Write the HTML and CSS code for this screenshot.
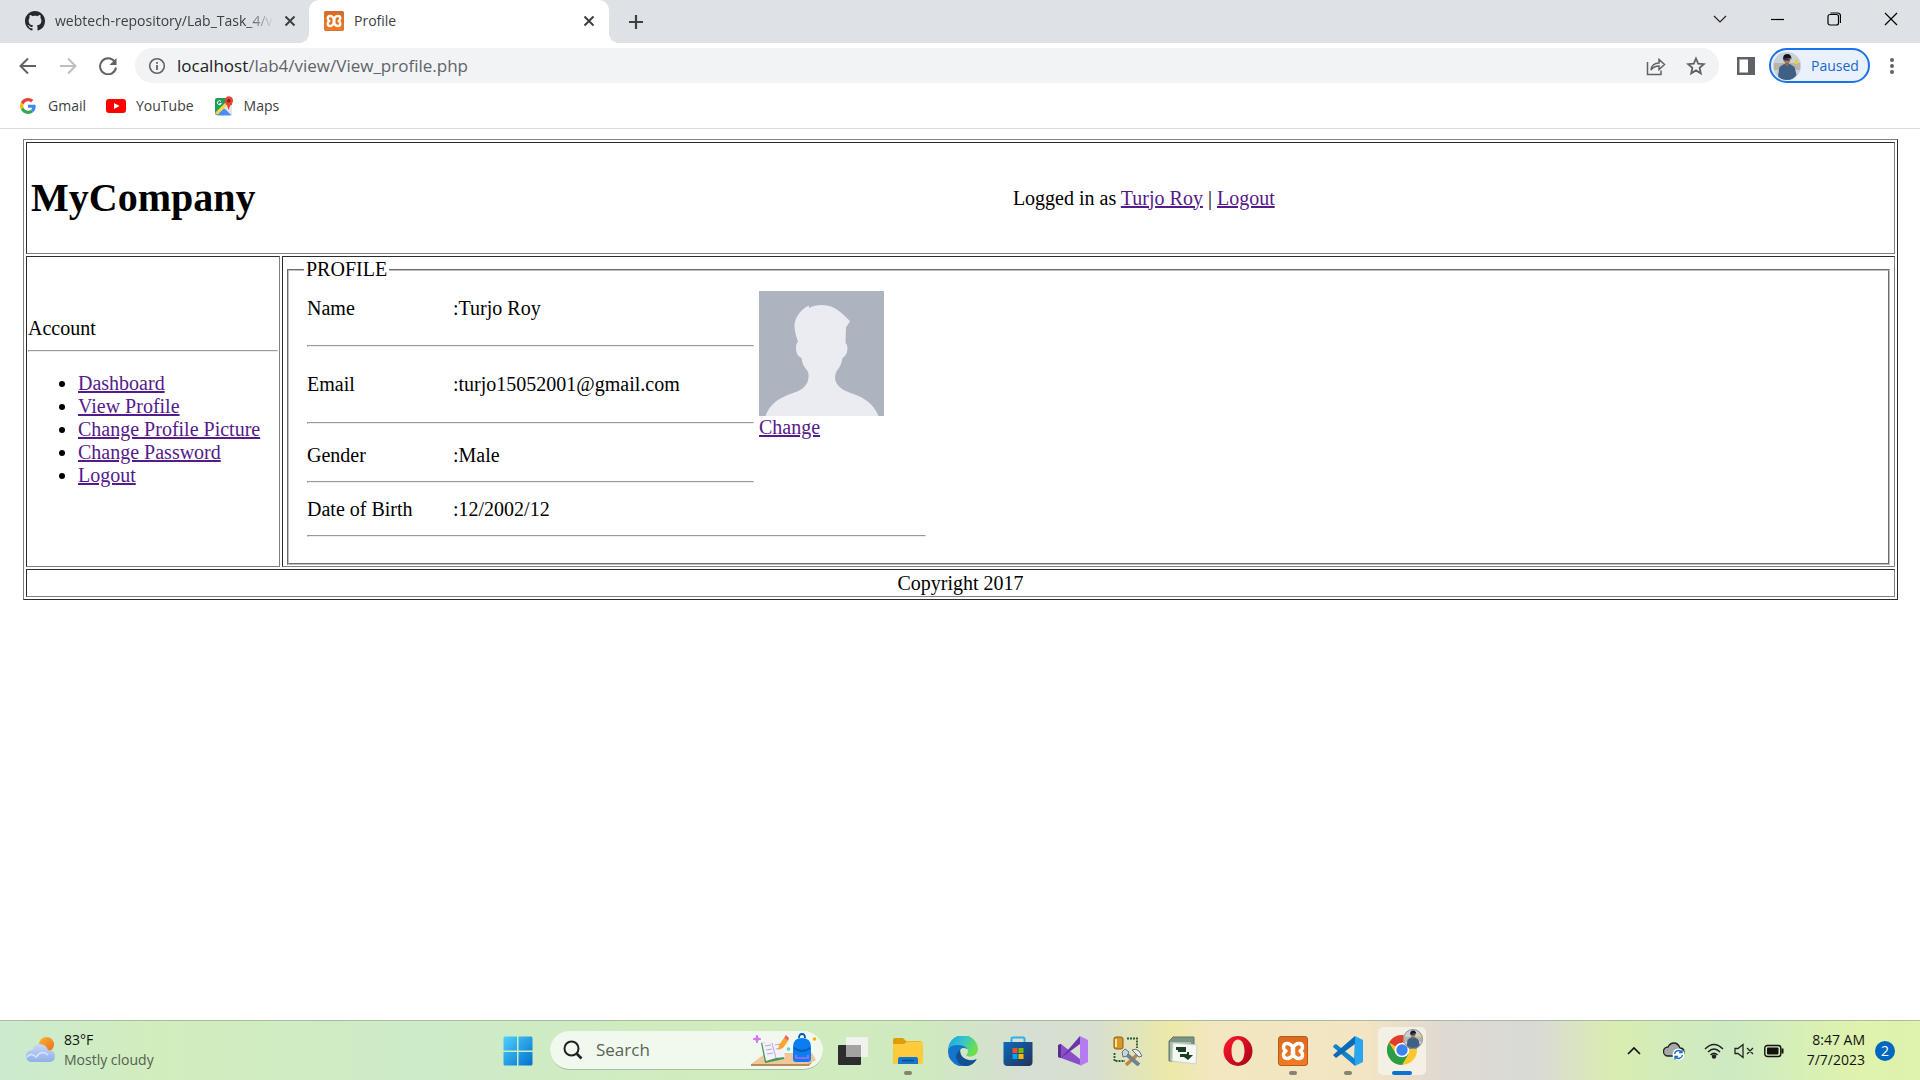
FILE: index.html
```html
<!DOCTYPE html>
<html lang="en">
<head>
<meta charset="utf-8">
<title>Profile</title>
<link rel="stylesheet" href="styles.css">
</head>
<body>
<svg class="defs" aria-hidden="true">
  <defs>
    <linearGradient id="xa" x1="0" y1="0" x2="0" y2="1"><stop offset="0" stop-color="#d96a20"/><stop offset="1" stop-color="#f57a22"/></linearGradient>
    <symbol id="xampp" viewBox="0 0 30 30">
      <rect x=".5" y=".5" width="29" height="29" rx="2.500" fill="url(#xa)" stroke="#b85a1c"/>
      <path d="M9 7.500q4 0 6 4.500 2-4.500 6-4.500 3.500 0 3.500 3.500 0 2.500-2.500 4 2.500 1.500 2.500 4 0 3.500-3.500 3.500-4 0-6-4.500-2 4.500-6 4.500-3.500 0-3.500-3.500 0-2.500 2.500-4-2.500-1.500-2.500-4 0-3.500 3.500-3.500z" fill="none" stroke="#fff" stroke-width="3.400" stroke-linejoin="round"/>
      <path d="M15 12v6" stroke="#fff" stroke-width="4.500"/>
    </symbol>
    <symbol id="cross" viewBox="0 0 12 12"><path d="M1.500 1.500l9 9M10.500 1.500l-9 9" stroke="#3c4043" stroke-width="2"/></symbol>
    <symbol id="person" viewBox="0 0 28 28">
      <circle cx="14" cy="14" r="14" fill="#c9d0d8"/>
      <path d="M1 11h26v7H1z" fill="#b9b3a8"/><path d="M22 7l3 1v4h-3z" fill="#e8cf3c"/>
      <path d="M5 24l1.500-9 4.500-3h6l4.500 3 2 8q-3 5-9.500 5t-9-4z" fill="#3e5f86"/>
      <path d="M12 9h4v4l-2 1-2-1z" fill="#8f6650"/><circle cx="14" cy="7.500" r="3.500" fill="#a77b62"/><path d="M10 7q0-5 4.200-5t4.200 5l-2-1-5 1z" fill="#17171b"/><path d="M10.500 6.500h6v2h-6z" fill="#26365e"/>
    </symbol>
  </defs>
</svg>

<header class="browser">
  <div class="tabstrip">
    <div class="tab">
      <svg width="20" height="20" viewBox="0 0 16 16"><path fill="#24292f" d="M8 0C3.580 0 0 3.580 0 8c0 3.540 2.290 6.530 5.470 7.590.4.070.55-.17.55-.38 0-.19-.01-.82-.01-1.490-2.010.37-2.530-.49-2.690-.94-.09-.23-.48-.94-.82-1.130-.28-.15-.68-.52-.01-.53.63-.01 1.080.58 1.230.82.72 1.210 1.870.87 2.330.66.070-.52.280-.87.510-1.070-1.780-.2-3.640-.89-3.640-3.950 0-.87.310-1.590.820-2.150-.08-.2-.36-1.020.08-2.120 0 0 .67-.21 2.200.82.640-.18 1.320-.27 2-.27s1.360.09 2 .27c1.530-1.040 2.200-.82 2.200-.82.440 1.100.160 1.920.080 2.120.510.560.820 1.270.820 2.150 0 3.070-1.870 3.750-3.650 3.950.290.250.540.730.540 1.480 0 1.070-.01 1.930-.01 2.200 0 .210.150.460.550.380A8.010 8.010 0 0 0 16 8c0-4.420-3.580-8-8-8z"/></svg>
      <span class="tab-title fade">webtech-repository/Lab_Task_4/v</span>
      <button class="icon-btn" aria-label="Close tab"><svg width="12" height="12"><use href="#cross"/></svg></button>
    </div>
    <div class="tab active">
      <svg width="20" height="20"><use href="#xampp"/></svg>
      <span class="tab-title">Profile</span>
      <button class="icon-btn" aria-label="Close tab"><svg width="12" height="12"><use href="#cross"/></svg></button>
    </div>
    <button class="icon-btn new-tab" aria-label="New tab"><svg width="16" height="16" viewBox="0 0 16 16"><path d="M8 1v14M1 8h14" stroke="#3c4043" stroke-width="2.200"/></svg></button>
    <div class="window-btns">
      <button class="icon-btn" aria-label="Search tabs"><svg width="14" height="14" viewBox="0 0 14 14"><path d="M1 4l6 6 6-6" fill="none" stroke="#222" stroke-width="1.200"/></svg></button>
      <button class="icon-btn" aria-label="Minimize"><svg width="14" height="14" viewBox="0 0 14 14"><path d="M1 7.500h13" stroke="#000" stroke-width="1.200"/></svg></button>
      <button class="icon-btn" aria-label="Restore"><svg width="14" height="14" viewBox="0 0 14 14" fill="none" stroke="#000" stroke-width="1.200"><rect x="1" y="2.500" width="10.500" height="10.500" rx="2"/><path d="M3.500 1h7q3 0 3 3v7"/></svg></button>
      <button class="icon-btn" aria-label="Close"><svg width="14" height="14" viewBox="0 0 14 14"><path d="M1 1l12 12M13 1L1 13" stroke="#000" stroke-width="1.200"/></svg></button>
    </div>
  </div>

  <div class="toolbar">
    <button class="icon-btn nav" aria-label="Back"><svg width="18" height="18" viewBox="0 0 18 18" fill="none" stroke="#5f6368" stroke-width="2"><path d="M17 9H2M9 1.500L1.500 9 9 16.500"/></svg></button>
    <button class="icon-btn nav" aria-label="Forward"><svg width="18" height="18" viewBox="0 0 18 18" fill="none" stroke="#bcbfc2" stroke-width="2"><path d="M1 9h15M9 1.500L16.500 9 9 16.500"/></svg></button>
    <button class="icon-btn nav" aria-label="Reload"><svg width="18" height="18" viewBox="0 0 18 18"><path d="M15.500 4.500A8 8 0 1 0 17 10.500" fill="none" stroke="#5f6368" stroke-width="2"/><path d="M17.500 1v7h-7z" fill="#5f6368"/></svg></button>
    <div class="omnibox">
      <svg width="18" height="18" viewBox="0 0 18 18"><circle cx="9" cy="9" r="7.300" fill="none" stroke="#5f6368" stroke-width="1.600"/><path d="M9 8v5M9 5v1.800" stroke="#5f6368" stroke-width="1.800"/></svg>
      <span class="url"><b>localhost</b>/lab4/view/View_profile.php</span>
      <button class="icon-btn" aria-label="Share"><svg width="20" height="20" viewBox="0 0 20 20" fill="none" stroke="#5f6368" stroke-width="1.500"><path d="M1.500 6v12.500h13.500v-4"/><path d="M5 14q1-7 8-7V3.500l5.500 5-5.500 5V10q-5 0-8 4z"/></svg></button>
      <button class="icon-btn" aria-label="Bookmark this page"><svg width="20" height="20" viewBox="0 0 20 20"><path d="M10 2.500l2.200 5.100 5.600.5-4.200 3.700 1.200 5.500L10 14.400l-4.800 2.900 1.200-5.500-4.200-3.700 5.600-.5z" fill="none" stroke="#5f6368" stroke-width="1.800"/></svg></button>
    </div>
    <button class="icon-btn side" aria-label="Side panel"><svg width="18" height="18" viewBox="0 0 18 18"><path d="M0 0h18v18H0zM2.500 2.500v13h8.500v-13z" fill="#5f6368" fill-rule="evenodd"/></svg></button>
    <button class="pill"><svg width="28" height="28"><use href="#person"/></svg><span>Paused</span></button>
    <button class="icon-btn menu" aria-label="Menu"><svg width="6" height="18" viewBox="0 0 6 18" fill="#5f6368"><circle cx="3" cy="3" r="2"/><circle cx="3" cy="9" r="2"/><circle cx="3" cy="15" r="2"/></svg></button>
  </div>

  <nav class="bookmarks">
    <a href="#"><svg width="20" height="16" viewBox="0 0 48 48"><path fill="#EA4335" d="M24 9.500c3.540 0 6.710 1.220 9.210 3.600l6.850-6.850C35.900 2.380 30.470 0 24 0 14.620 0 6.510 5.380 2.560 13.220l7.980 6.190C12.430 13.720 17.740 9.500 24 9.500z"/><path fill="#4285F4" d="M46.980 24.550c0-1.570-.15-3.090-.38-4.550H24v9.020h12.940c-.58 2.960-2.260 5.480-4.780 7.180l7.730 6c4.510-4.180 7.090-10.360 7.090-17.650z"/><path fill="#FBBC05" d="M10.530 28.590c-.48-1.450-.76-2.990-.76-4.590s.27-3.140.76-4.590l-7.980-6.190C.92 16.460 0 20.120 0 24c0 3.880.92 7.540 2.560 10.780z"/><path fill="#34A853" d="M24 48c6.480 0 11.930-2.130 15.890-5.810l-7.730-6c-2.150 1.450-4.920 2.300-8.160 2.300-6.260 0-11.570-4.220-13.470-9.910l-7.980 6.190C6.510 42.620 14.620 48 24 48z"/></svg>Gmail</a>
    <a href="#"><svg width="20" height="16" viewBox="0 0 20 16"><rect y="1" width="20" height="14" rx="3" fill="#f00"/><path d="M8 5l5.500 3L8 11z" fill="#fff"/></svg>YouTube</a>
    <a href="#"><svg width="20" height="20" viewBox="0 0 20 20"><path d="M1 4q0-2 2-2h12l3 3v12q0 2-2 2H3q-2 0-2-2z" fill="#1e9e58"/><path d="M3 19l7-7 8 7z" fill="#4e8df5"/><path d="M1 17L14 4l3 3L4 19z" fill="#fdd34c"/><path d="M10 12l7 7 1-1V9l-4-1z" fill="#e6e6e6"/><path d="M3 19.500l7-7 7 7z" fill="#4e8df5"/><path d="M14.500 14q-.5-4-3-6.500Q10 4 12 1.500q2.500-2.500 5.500-.3Q20.500 4 18 7.500q-2.500 2.500-3.500 6.500z" fill="#e84436"/><circle cx="14.800" cy="4.800" r="1.700" fill="#7d231c"/><path d="M7 5.500a2 2 0 1 0 .3 2H5.500" fill="none" stroke="#fff"/></svg>Maps</a>
  </nav>
</header>

<main>
  <table class="layout">
    <tbody>
    <tr>
      <td colspan="2">
        <div class="masthead">
          <h1>MyCompany</h1>
          <div>Logged in as <a href="#">Turjo Roy</a> | <a href="#">Logout</a></div>
        </div>
      </td>
    </tr>
    <tr>
      <td class="side-cell">
        Account
        <hr>
        <ul>
          <li><a href="#">Dashboard</a></li>
          <li><a href="#">View Profile</a></li>
          <li><a href="#">Change Profile Picture</a></li>
          <li><a href="#">Change Password</a></li>
          <li><a href="#">Logout</a></li>
        </ul>
      </td>
      <td>
        <fieldset>
          <legend>PROFILE</legend>
          <table class="profile">
            <colgroup><col class="c-label"><col class="c-value"><col></colgroup>
            <tbody>
            <tr class="r-name"><th scope="row">Name</th><td>:Turjo Roy</td>
              <td class="photo" rowspan="6">
                <svg width="125" height="125" viewBox="0 0 125 125" role="img" aria-label="Profile picture"><rect width="125" height="125" fill="#adb3bf"/><path d="M50 17v-2.500C42 18 35 27 35.500 36c.3 6 2.500 11 3.500 15-3 1-2.500 11 .5 14l3 2c1 7 3 9 6 13 2 3 1 10-1 13-4 7-12 8-21 12-10 4-17 11-20 20h113c-4-10-11-16-20-20-10-4-18-6-22-13-2-4-2-9 1-13 3-4 4-7 5-12 6-3 6-13 3-15l.5-16q2-2 4-6C83 23 77 14 63 14q-8 0-13 3z" fill="#eaecf2"/></svg>
                <a href="#">Change</a>
              </td></tr>
            <tr><td colspan="2"><hr></td></tr>
            <tr class="r-email"><th scope="row">Email</th><td>:turjo15052001@gmail.com</td></tr>
            <tr><td colspan="2"><hr></td></tr>
            <tr class="r-gender"><th scope="row">Gender</th><td>:Male</td></tr>
            <tr><td colspan="2"><hr></td></tr>
            <tr class="r-birth"><th scope="row">Date of Birth</th><td>:12/2002/12</td><td></td></tr>
            <tr><td colspan="3"><hr></td></tr>
            </tbody>
          </table>
        </fieldset>
      </td>
    </tr>
    <tr><td colspan="2" class="copyright">Copyright 2017</td></tr>
    </tbody>
  </table>
</main>

<footer class="taskbar">
  <div class="weather">
    <svg width="30" height="26" viewBox="0 0 30 26"><defs><linearGradient id="cl" x1="0" y1="0" x2="0" y2="1"><stop offset="0" stop-color="#c9d8f5"/><stop offset="1" stop-color="#8fb0ec"/></linearGradient><linearGradient id="sun" x1="0" y1="0" x2="1" y2="1"><stop offset="0" stop-color="#f9b42d"/><stop offset="1" stop-color="#ee6b1a"/></linearGradient></defs><circle cx="21.500" cy="7.500" r="7.500" fill="url(#sun)"/><path d="M6 25a6 6 0 0 1-1-11.500 5 5 0 0 1 2.500-.5Q9 7 15 7q6 0 8 6 7 0 7 6t-6 6z" fill="url(#cl)"/><path d="M2 20q4-5 9 0 6-8 12-2" fill="none" stroke="#dce6fa" stroke-width="1.500"/></svg>
    <div><div>83°F</div><div class="muted">Mostly cloudy</div></div>
  </div>

  <div class="apps">
    <button class="app" aria-label="Start"><svg width="30" height="30" viewBox="0 0 30 30"><defs><linearGradient id="win" x1="0" y1="0" x2="1" y2="1"><stop offset="0" stop-color="#4fd0fb"/><stop offset="1" stop-color="#0070ce"/></linearGradient></defs><path d="M2 .5h12v14H.5V2Q.5.500 2 .5zM15.500.5H28q1.500 0 1.500 1.500v12.500h-14zM.5 16H14v13.500H2Q.5 29.500.5 28zM15.500 16h14v12q0 1.500-1.500 1.500H15.500z" fill="url(#win)"/></svg></button>
    <label class="search">
      <svg width="20" height="20" viewBox="0 0 20 20" fill="none" stroke="#222" stroke-width="2"><circle cx="8.500" cy="8.500" r="7"/><path d="M13.500 13.500l5 5" stroke-width="2.600"/></svg>
      <input type="text" placeholder="Search" aria-label="Search">
      <svg width="68" height="34" viewBox="0 0 68 34"><path d="M0 31l15-11h46l4 7-9 5H0z" fill="#f0c79a"/><path d="M0 31h57l4-2-3 4H0z" fill="#b9895c"/><path d="M10 10l3-1 20 13v4l-19 4z" fill="#3f9a56"/><path d="M11 9l10 1 10-3 3 17-9 1-10 3z" fill="#f4f1fb"/><path d="M21 10l4 15M14 13l6-1M15 17l6-1M16 21l6-1M24 12l5-1M25 16l5-1" stroke="#b3acca" fill="none"/><path d="M27 17l1-5 5-7 4 3-5 7z" fill="#f8a52b"/><path d="M33 5l2-3 3 3-1 3z" fill="#f0645a"/><path d="M6 2l1 3 3 1-3 1-1 3-1-3-3-1 3-1z" fill="#d873f5" stroke="#d873f5"/><path d="M42 14q0-9 9-9t9 9v12q0 3-3 3H45q-3 0-3-3z" fill="#087ef0"/><path d="M48 5q0-4 3-4t3 4M43 15q8 6 16 0" fill="none" stroke="#0759ba" stroke-width="1.800"/><path d="M45 22v3h12v-3" fill="none" stroke="#b06af5" stroke-width="1.600"/><circle cx="63.500" cy="6" r="1.800" fill="#f5ae12"/><circle cx="37.500" cy="16" r="1.800" fill="#57cfe0"/></svg>
    </label>
    <button class="app" aria-label="Task view"><svg width="30" height="30" viewBox="0 0 30 30"><rect y="9" width="23" height="20" rx="1" fill="#2d2d2d"/><rect x="8" y="1" width="22" height="20" rx="1" fill="#f2f2f2" opacity=".92"/><path d="M8 9h15v12H8z" fill="#a3a3a3"/></svg></button>
    <button class="app open" aria-label="File Explorer"><svg width="30" height="30" viewBox="0 0 30 30"><path d="M0 4q0-2 2-2h8l3 3h15v4H0z" fill="#e09d08"/><path d="M0 8h11l3-2.500h14q2 0 2 2V26q0 2-2 2H0z" fill="#fecb3c"/><path d="M5 28v-5q0-2 2-2h16q2 0 2 2v5z" fill="#1277ce"/><path d="M9 24.500h12" stroke="#0a4c91" stroke-width="1.600"/></svg></button>
    <button class="app" aria-label="Edge"><svg width="30" height="30" viewBox="0 0 30 30"><defs><linearGradient id="eg" x1="0" y1="0" x2="1" y2=".4"><stop offset="0" stop-color="#1b9fe0"/><stop offset=".5" stop-color="#31c3d2"/><stop offset="1" stop-color="#6ee04a"/></linearGradient></defs><path d="M0 15A15 15 0 0 1 30 13c0 5-4 7.500-8 7.500-3 0-4-1-3.500-2Q20 17 20 15q-1-5-8-5Q3 10 0 15z" fill="url(#eg)"/><path d="M0 15q1-6 9-6 8 0 10.500 4Q13 10 12 15c0 6 4 10 9 10q4 0 7-2a15 15 0 0 1-28-8z" fill="#1575ca"/><path d="M12 14q-4 3-4 7 1 7 8 9 8 1 13-7-4 2-8 1-9-2-9-10z" fill="#124f96"/></svg></button>
    <button class="app" aria-label="Microsoft Store"><svg width="30" height="30" viewBox="0 0 30 30"><defs><linearGradient id="st" x1="0" y1="0" x2="1" y2="1"><stop offset="0" stop-color="#0b6cbd"/><stop offset="1" stop-color="#26305a"/></linearGradient></defs><path d="M8.500 6V3q0-1.500 1.500-1.500h10q1.500 0 1.500 1.500v3" fill="none" stroke="#2ab1ee" stroke-width="2"/><path d="M.5 6h29v20q0 4-4 4h-21q-4 0-4-4z" fill="url(#st)"/><path d="M9.500 12h5v5h-5z" fill="#f25022"/><path d="M15.500 12h5v5h-5z" fill="#7fba00"/><path d="M9.500 18h5v5h-5z" fill="#00a4ef"/><path d="M15.500 18h5v5h-5z" fill="#ffb900"/></svg></button>
    <button class="app" aria-label="Visual Studio"><svg width="30" height="30" viewBox="0 0 30 30"><path d="M0 9l3-1 19 15v6L3 22l-3-1z" fill="#8a4fc8"/><path d="M0 9l3-1v14l-3-1z" fill="#5c2d91"/><path d="M3 22L22 0v8L3 22z" fill="#6a36a5"/><path d="M22 0l8 4v22l-8 4z" fill="#b57bf0"/></svg></button>
    <button class="app" aria-label="Tools"><svg width="30" height="30" viewBox="0 0 30 30"><rect x="1" y="1" width="9" height="12" rx="2" fill="#d99826" stroke="#8a5d13"/><path d="M3 3v8" stroke="#fbe3a0" stroke-width="2"/><path d="M14 2.500h10V12M1.500 17v8H12" fill="none" stroke="#27582c" stroke-width="1.800" stroke-dasharray="2 1"/><path d="M13 29l12-11" stroke="#b98a3b" stroke-width="3.500"/><path d="M19 14q4-2 7 1l3 5-3 1-3-3z" fill="#e8edf2" stroke="#63707e"/><path d="M12 17l14 12" stroke="#6f8296" stroke-width="4"/><path d="M9 16l3-3 4 3-2 4-4 1z" fill="#c7d5e2" stroke="#63707e"/></svg></button>
    <button class="app" aria-label="Project"><svg width="30" height="30" viewBox="0 0 30 30"><path d="M1 5l4-4h21v9L6 25H1z" fill="#7d9386" stroke="#60776a"/><path d="M2 6h21v4L6 25H2z" fill="#a9bbb0"/><path d="M5 7l24 2-1 19-24-3z" fill="#f4f8f3" stroke="#ccd5ca"/><path d="M8 11h10v5h-8v-2H8zM12 18h7v-2h2v3h4l-5 5-4-3h-4z" fill="#1d3d27"/></svg></button>
    <button class="app" aria-label="Opera"><svg width="30" height="30" viewBox="0 0 30 30"><defs><linearGradient id="op" x1="0" y1="0" x2="1" y2="1"><stop offset="0" stop-color="#ff1b2d"/><stop offset="1" stop-color="#a70014"/></linearGradient></defs><path d="M15 0a14.500 15 0 0 0 0 30 14.500 15 0 0 0 0-30zm0 3.500c4 0 6.500 5 6.500 11.500S19 26.500 15 26.500 8.500 21.500 8.500 15 11 3.500 15 3.500z" fill="url(#op)" fill-rule="evenodd"/></svg></button>
    <button class="app open" aria-label="XAMPP"><svg width="30" height="30"><use href="#xampp"/></svg></button>
    <button class="app open" aria-label="Visual Studio Code"><svg width="30" height="30" viewBox="0 0 30 30"><path d="M22 0l8 4v22l-8 4-1-8z" fill="#2aa6ee"/><path d="M1 9l2-1 19 15v7L0 11z" fill="#1483cf"/><path d="M22 0v8L3 22l-3-3z" fill="#0a6cb8"/></svg></button>
    <button class="app current" aria-label="Chrome"><svg width="38" height="38" viewBox="0 0 38 38"><circle cx="15" cy="22" r="15" fill="#fdc72c"/><path d="M15 22L2 14.500A15 15 0 0 1 28 14.500H15z" fill="#e33b2e"/><path d="M15 22l6.500 4L15 37A15 15 0 0 1 2 14.500L9 26z" fill="#2a9d48"/><circle cx="15" cy="22" r="7.300" fill="#fff"/><circle cx="15" cy="22" r="5.700" fill="#3b83f2"/><svg x="16" y="1" width="20" height="20"><use href="#person"/></svg><circle cx="26" cy="11" r="9.500" fill="none" stroke="#8f949a"/></svg></button>
  </div>

  <div class="tray">
    <svg width="14" height="14" viewBox="0 0 14 14"><path d="M1 10l6-6 6 6" fill="none" stroke="#111" stroke-width="1.600"/></svg>
    <svg class="cloud" width="22" height="20" viewBox="0 0 22 20"><path d="M5 15a4.500 4.500 0 0 1 0-9Q7 2 11 2t6 5q4 0 4 4t-3 4z" fill="#a5a9a5" stroke="#222" stroke-width="1.300"/><circle cx="15.500" cy="13.500" r="6" fill="#fff"/><path d="M11.500 13a4 4 0 0 1 7-2M19.500 14a4 4 0 0 1-7 2M19 8.500v3h-3M12 18.500v-3h3" fill="none" stroke="#1170ca" stroke-width="1.400"/></svg>
    <svg width="20" height="16" viewBox="0 0 20 16" fill="none" stroke="#222" stroke-width="1.500"><path d="M1 6q9-9 18 0M4 9q6-6 12 0M6.500 12q3.500-3.500 7 0"/><circle cx="10" cy="13.500" r="1.500" fill="#222"/></svg>
    <svg width="20" height="16" viewBox="0 0 20 16" fill="none" stroke="#222" stroke-width="1.300"><path d="M1 5.500h3L9 1.500v13l-5-4H1zM13 5l6 6M19 5l-6 6"/></svg>
    <svg width="20" height="14" viewBox="0 0 20 14"><rect x=".8" y="1.500" width="16" height="11" rx="2.500" fill="none" stroke="#111" stroke-width="1.400"/><rect x="3" y="3.500" width="11.500" height="7" rx="1" fill="#111"/><path d="M18.500 4.500v5" stroke="#111" stroke-width="2"/></svg>
    <div class="clock"><div>8:47 AM</div><div>7/7/2023</div></div>
    <span class="badge">2</span>
  </div>
</footer>
</body>
</html>
```
FILE: styles.css
```css
* { box-sizing: border-box; }
body {
  margin: 0;
  min-height: 100vh;
  display: flex;
  flex-direction: column;
  background: #fff;
  color: #000;
  font-family: "Liberation Serif", serif;
  font-size: 20px;
  line-height: 23px;
}
.defs { position: absolute; width: 0; height: 0; }
svg { flex: none; display: block; }
button { font: inherit; border: 0; background: none; padding: 0; color: inherit; }
.icon-btn { display: flex; align-items: center; justify-content: center; flex: none; }

/* Browser frame */
.browser {
  border-bottom: 1px solid #dadce0;
  font-family: "Open Sans", sans-serif;
  font-size: 14px;
  line-height: 20px;
  color: #3c4043;
}
.tabstrip { display: flex; height: 43px; background: #dee1e6; }
.tab { display: flex; align-items: center; width: 309px; padding: 0 13px 1px 25px; gap: 10px; }
.tab-title { flex: 1; min-width: 0; white-space: nowrap; }
.fade { -webkit-mask-image: linear-gradient(90deg, #000 87%, transparent); mask-image: linear-gradient(90deg, #000 87%, transparent); }
.active { position: relative; width: 300px; padding-left: 15px; padding-right: 14px; background: #fff; border-radius: 10px 10px 0 0; }
.active::before, .active::after { content: ""; position: absolute; bottom: 0; width: 10px; height: 10px; }
.active::before { left: -10px; background: radial-gradient(circle at 0 0, #dee1e6 10px, #fff 10px); }
.active::after { right: -10px; background: radial-gradient(circle at 100% 0, #dee1e6 10px, #fff 10px); }
.new-tab { margin: 0 auto 0 19px; width: 16px; }
.window-btns { display: flex; height: 37px; padding-right: 1px; }
.window-btns .icon-btn { width: 57px; }

.toolbar { display: flex; align-items: center; height: 45px; padding: 0 21px 0 8px; }
.nav { width: 40px; }
.omnibox { flex: 1; display: flex; align-items: center; height: 35px; margin-left: 7px; padding: 0 13px; border-radius: 18px; background: #f1f3f4; }
.url { flex: 1; margin-left: 11px; font-size: 17px; color: #5f6368; }
.url b { font-weight: 400; color: #202124; }
.omnibox .icon-btn + .icon-btn { margin-left: 20px; }
.side { margin: 0 14px 0 18px; }
.pill { display: flex; align-items: center; gap: 10px; width: 101px; height: 35px; padding: 0 2px; border: 2px solid #1a73e8; border-radius: 18px; background: #e9f1fc; color: #1967d2; }
.menu { width: 14px; margin-left: 15px; }
.bookmarks { display: flex; gap: 20px; height: 40px; padding: 0 18px 4px; }
.bookmarks a { display: flex; align-items: center; gap: 10px; color: #3c4043; text-decoration: none; }

/* Page */
main { flex: 1; padding: 10px 22px 10px 23px; }
main a { color: #551a8b; }
hr { margin: 10px 0; height: 2px; border: 1px solid; border-color: #9a9a9a #eee #eee #9a9a9a; }
.layout { width: 100%; border: 1px solid; border-color: #808080 #2c2c2c #2c2c2c #808080; border-spacing: 2px; }
.layout > tbody > tr > td { padding: 1px; border: 1px solid; border-color: #2c2c2c #808080 #808080 #2c2c2c; }
.masthead { display: grid; grid-template-columns: 984fr 879fr; align-items: center; height: 108px; padding: 0 3px; }
h1 { margin: 0; font-size: 40px; line-height: 46px; }
.side-cell { width: 254px; }
ul { margin: 20px 0; padding-left: 50px; }
fieldset { min-width: 0; margin: 0 3px; padding: 10px 15px 16px; border: 2px groove #c0c0c0; }
legend { padding: 0 2px; }
.profile { table-layout: fixed; width: 619px; margin-left: 3px; border-spacing: 0; }
.profile th { font-weight: 400; text-align: left; }
.profile th, .profile td { padding: 0; }
.c-label { width: 146px; }
.c-value { width: 301px; }
.r-name { height: 44px; }
.profile .r-name th, .profile .r-name td { padding-bottom: 9px; }
.r-email { height: 55px; }
.r-gender { height: 37px; }
.profile .r-gender th, .profile .r-gender td { padding-top: 6px; }
.r-birth { height: 32px; }
.profile .r-name .photo { vertical-align: top; padding: 0 0 0 5px; }
.copyright { height: 28px; text-align: center; }

/* Taskbar */
.taskbar {
  display: grid;
  grid-template-columns: 1fr auto 1fr;
  align-items: center;
  height: 60px;
  border-top: 1px solid #aabaa0;
  background: linear-gradient(90deg, #cbebcf 0, #d2edbd 8%, #cdebc8 22%, #d1ecbd 38%, #cfeabf 48%, #d6dfd2 53%, #d6dfd0 57%, #ece9a8 61%, #f2e7c0 63%, #f3e5c3 71%, #dfd9d2 75%, #d9dad6 80%, #d9edb1 84%, #cdeac3 90%, #e0f3ac 97%, #dff2ae 100%);
  font-family: "Open Sans", sans-serif;
  font-size: 14px;
  line-height: 20px;
  color: #111;
}
.weather { display: flex; align-items: center; gap: 9px; padding: 0 0 2px 25px; }
.muted { color: #53604f; }
.apps { display: flex; align-items: center; }
.app { position: relative; display: flex; align-items: center; justify-content: center; width: 55px; height: 48px; }
.open::after, .current::after { content: ""; position: absolute; bottom: 0; left: 24px; width: 8px; height: 4px; border-radius: 2px; background: #84846f; }
.current { width: 48px; margin: 0 4px 0 3px; border-radius: 5px; background: #f5f0e6; }
.current svg { margin-bottom: 8px; margin-left: 8px; }
.current::after { left: 14px; width: 20px; background: #0a72cf; }
.search { display: flex; align-items: center; gap: 13px; width: 273px; height: 39px; margin: 0 2px 0 5px; padding: 0 4px 0 13px; border-radius: 20px; background: #f1f9ee; border-bottom: 1px solid #a9bd9c; }
.search input { flex: 1; min-width: 0; border: 0; padding: 0; background: none; font: 17px/24px "Open Sans", sans-serif; }
.search input::placeholder { color: #5a6356; opacity: 1; }
.tray { display: flex; align-items: center; justify-content: flex-end; gap: 10px; padding-right: 25px; }
.cloud { margin: 0 9px 0 12px; }
.clock { margin-left: 13px; padding-bottom: 2px; text-align: right; }
.badge { width: 20px; height: 20px; border-radius: 50%; background: #0067c0; color: #fff; text-align: center; }
```
